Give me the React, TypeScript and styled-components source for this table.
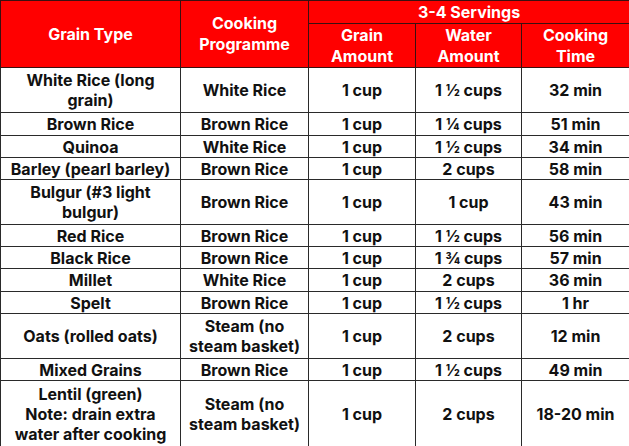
import React from 'react';
import styled, { createGlobalStyle } from 'styled-components';

const GlobalStyle = createGlobalStyle`
  html, body {
    margin: 0;
    padding: 0;
    background: #ffffff;
    overflow: hidden;
  }
  body {
    font-family: Inter, "Noto Sans", sans-serif;
  }
`;

interface Row {
  grain: string[];
  programme: string[];
  amount: string;
  water: string;
  time: string;
  height: number;
}

const columns = [180, 128, 107, 106, 108];

const rows: Row[] = [
  { grain: ['White Rice (long', 'grain)'], programme: ['White Rice'], amount: '1 cup', water: '1 ½ cups', time: '32 min', height: 45 },
  { grain: ['Brown Rice'], programme: ['Brown Rice'], amount: '1 cup', water: '1 ¼ cups', time: '51 min', height: 23 },
  { grain: ['Quinoa'], programme: ['White Rice'], amount: '1 cup', water: '1 ½ cups', time: '34 min', height: 22 },
  { grain: ['Barley (pearl barley)'], programme: ['Brown Rice'], amount: '1 cup', water: '2 cups', time: '58 min', height: 22 },
  { grain: ['Bulgur (#3 light', 'bulgur)'], programme: ['Brown Rice'], amount: '1 cup', water: '1 cup', time: '43 min', height: 45 },
  { grain: ['Red Rice'], programme: ['Brown Rice'], amount: '1 cup', water: '1 ½ cups', time: '56 min', height: 22 },
  { grain: ['Black Rice'], programme: ['Brown Rice'], amount: '1 cup', water: '1 ¾ cups', time: '57 min', height: 22 },
  { grain: ['Millet'], programme: ['White Rice'], amount: '1 cup', water: '2 cups', time: '36 min', height: 23 },
  { grain: ['Spelt'], programme: ['Brown Rice'], amount: '1 cup', water: '1 ½ cups', time: '1 hr', height: 22 },
  { grain: ['Oats (rolled oats)'], programme: ['Steam (no', 'steam basket)'], amount: '1 cup', water: '2 cups', time: '12 min', height: 45 },
  { grain: ['Mixed Grains'], programme: ['Brown Rice'], amount: '1 cup', water: '1 ½ cups', time: '49 min', height: 22 },
  { grain: ['Lentil (green)', 'Note: drain extra', 'water after cooking'], programme: ['Steam (no', 'steam basket)'], amount: '1 cup', water: '2 cups', time: '18-20 min', height: 66 },
];

const Table = styled.table`
  width: 629px;
  height: 446px;
  border-collapse: collapse;
  table-layout: fixed;
  font-size: 16px;
  font-weight: 700;
  color: #111111;
`;

const Col = styled.col<{ $w: number }>`
  width: ${(p) => p.$w}px;
`;

const HeadRow = styled.tr<{ $h: number }>`
  height: ${(p) => p.$h}px;
`;

const HeadCell = styled.th`
  background: #ff0000;
  color: #ffffff;
  border: 1px solid #3a1010;
  padding: 0;
  line-height: 21px;
  text-align: center;
  vertical-align: middle;
  font-weight: 700;
  white-space: nowrap;
`;

const BodyRow = styled.tr<{ $h: number }>`
  height: ${(p) => p.$h}px;
`;

const Cell = styled.td`
  border: 1px solid #2a2a2a;
  padding: 0;
  line-height: 20px;
  text-align: center;
  vertical-align: middle;
  white-space: nowrap;
`;

const Line = styled.div`
  display: block;
`;

const Lines = ({ text }: { text: string[] }) => (
  <>
    {text.map((t, i) => (
      <Line key={i}>{t}</Line>
    ))}
  </>
);

export default function App() {
  return (
    <>
      <GlobalStyle />
      <Table>
        <colgroup>
          {columns.map((w, i) => (
            <Col key={i} $w={w} />
          ))}
        </colgroup>
        <thead>
          <HeadRow $h={23}>
            <HeadCell rowSpan={2}>Grain Type</HeadCell>
            <HeadCell rowSpan={2}>
              <Lines text={['Cooking', 'Programme']} />
            </HeadCell>
            <HeadCell colSpan={3}>3-4 Servings</HeadCell>
          </HeadRow>
          <HeadRow $h={44}>
            <HeadCell>
              <Lines text={['Grain', 'Amount']} />
            </HeadCell>
            <HeadCell>
              <Lines text={['Water', 'Amount']} />
            </HeadCell>
            <HeadCell>
              <Lines text={['Cooking', 'Time']} />
            </HeadCell>
          </HeadRow>
        </thead>
        <tbody>
          {rows.map((r, i) => (
            <BodyRow key={i} $h={r.height}>
              <Cell>
                <Lines text={r.grain} />
              </Cell>
              <Cell>
                <Lines text={r.programme} />
              </Cell>
              <Cell>{r.amount}</Cell>
              <Cell>{r.water}</Cell>
              <Cell>{r.time}</Cell>
            </BodyRow>
          ))}
        </tbody>
      </Table>
    </>
  );
}
